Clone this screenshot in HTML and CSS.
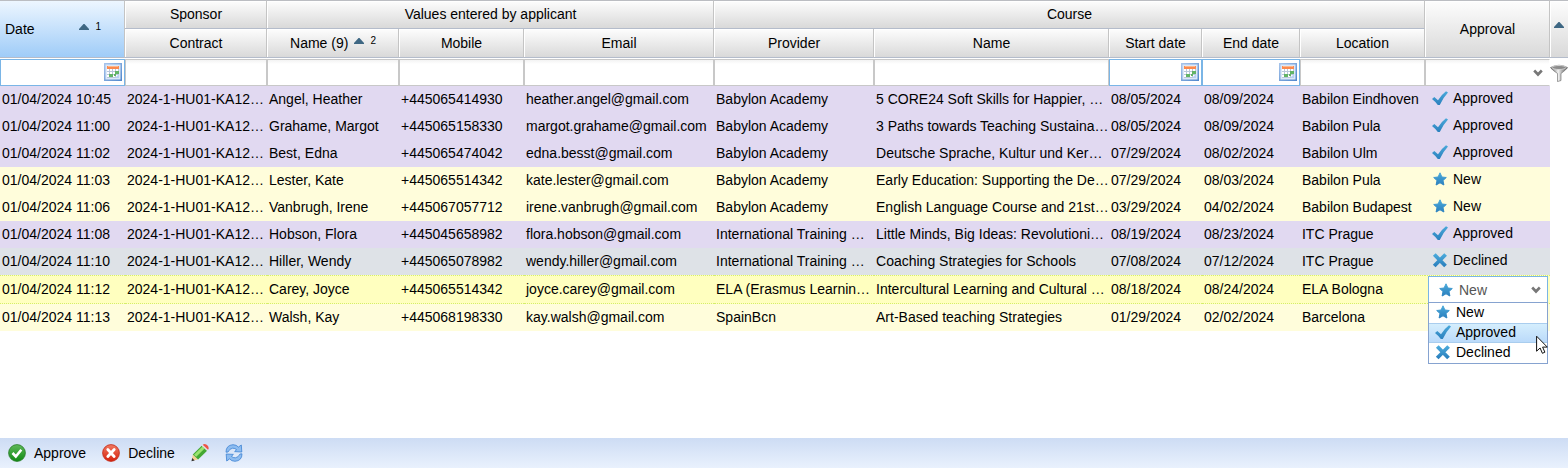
FILE: index.html
```html
<!DOCTYPE html>
<html lang="en">
<head>
<meta charset="utf-8">
<title>Applications</title>
<link rel="stylesheet" href="styles.css">
</head>
<body>
<svg class="sprite" aria-hidden="true">
  <defs>
    <linearGradient id="blue" x1="0" y1="0" x2="0" y2="1"><stop offset="0" stop-color="#4aa9da"/><stop offset="1" stop-color="#2b80be"/></linearGradient>
    <linearGradient id="green" x1="0" y1="0" x2="0" y2="1"><stop offset="0" stop-color="#5fb85a"/><stop offset="1" stop-color="#0f8a12"/></linearGradient>
    <linearGradient id="red" x1="0" y1="0" x2="0" y2="1"><stop offset="0" stop-color="#f07a62"/><stop offset="1" stop-color="#d6210c"/></linearGradient>
    <linearGradient id="frame" x1="0" y1="0" x2="1" y2="1"><stop offset="0" stop-color="#a9c6ec"/><stop offset="1" stop-color="#4f86cc"/></linearGradient>
    <linearGradient id="metal" x1="0" y1="0" x2="1" y2="0"><stop offset="0" stop-color="#666"/><stop offset=".45" stop-color="#f2f2f2"/><stop offset="1" stop-color="#505050"/></linearGradient>
    <symbol id="check" viewBox="0 0 16 16"><path fill="url(#blue)" d="M0 9 2.300 6.900 6 10.200Q9 5 14 1.200L16 2.500Q10.800 8 7.800 15H5.800Q3.400 11.600 0 9z"/></symbol>
    <symbol id="star" viewBox="0 0 16 16"><path fill="url(#blue)" stroke="url(#blue)" stroke-linejoin="round" d="M8 1.800 9.900 6l4.400.5-3.300 3 .9 4.500L8 11.800 4.100 14 5 9.500l-3.300-3L6.100 6z"/></symbol>
    <symbol id="cross" viewBox="0 0 16 16"><path fill="none" stroke="url(#blue)" stroke-width="3.800" d="M2.300 2.500 13.500 14M13.600 2.500 2.200 14"/></symbol>
    <symbol id="calendar" viewBox="0 0 18 18"><path fill="url(#frame)" d="M0 0h18v18H0z"/><path fill="#dce8f8" d="M1.500 1.500h15v15h-15z"/><path fill="#fff" d="M3 3h12v12H3z"/><path fill="#b9c7da" d="M3 8h12v1H3zM3 11h12v1H3zM3 14h12v1H3zM5 6h1v9H5zM8 6h1v9H8zM11 6h1v9h-1zM14 6h1v9h-1z"/><path fill="#fb8a4e" d="M3 3h12v3H3z"/><path fill="#ffb78a" d="M4 3h10v1H4z"/><path fill="#62b466" d="M11 8h4v3h-4zM5 11h4v3H5zM10 11h2v2h-2z"/><path fill="#b8d0f2" d="m11 15 4-4v4z"/></symbol>
    <symbol id="sort" viewBox="0 0 10 6"><path fill="#3e6783" d="M4.500 0h1L10 5v1H0V5z"/></symbol>
    <symbol id="funnel" viewBox="0 0 18 18"><path fill="url(#metal)" stroke="#666" stroke-width=".6" d="M.5 3.500Q9-1 17.500 3.500 17 5 11 9.500v7L7.500 17.600V9.500Q1.500 5.500.5 3.500z"/><ellipse cx="9" cy="3.500" rx="7" ry="2" fill="#8b8b8b" stroke="#ddd" stroke-width=".8"/></symbol>
    <symbol id="chevron" viewBox="0 0 10 8"><path fill="none" stroke="#777" stroke-width="2.600" d="M1.200 1.500 5 5.500l3.800-4"/></symbol>
    <symbol id="ok" viewBox="0 0 18 18"><circle cx="9" cy="9" r="8.400" fill="url(#green)" stroke="#2b7d2c" stroke-width=".8"/><path d="m4.500 9 3.300 3.500 5.500-6.800" fill="none" stroke="#fff" stroke-width="2.600"/></symbol>
    <symbol id="no" viewBox="0 0 18 18"><circle cx="9" cy="9" r="8.400" fill="url(#red)" stroke="#c22a18" stroke-width=".8"/><path d="m5.800 5.500 6.400 7m0-7-6.400 7" stroke="#fff" stroke-width="2.800" stroke-linecap="round"/></symbol>
    <symbol id="pencil" viewBox="0 0 18 18"><path fill="#f4cf91" d="m.8 16.800 1-6.400 5.300 5z"/><path fill="#333" d="m.5 17.300.6-3.200 2.600 2.500z"/><path fill="#43a832" d="m1.800 10.400 8.900-8.700 5.400 5-9 8.700z"/><path fill="#9ae36f" d="m3 10.700 8.500-8.300 2.200 2-8.500 8.300z"/><path fill="#e2e2e2" d="m10.700 1.700 1-.9 5.300 5-.9.900z"/><path fill="#ee5545" d="M11.700.8q1.800-1.300 3.600-.2 2.300 1.200 2.400 3.400 0 1.100-.7 1.800z"/></symbol>
    <symbol id="refresh" viewBox="0 0 18 18"><g id="swirl"><path fill="#8dbcf0" stroke="#3d83d3" stroke-width=".8" d="M1 8.200Q1 1.200 8 .7q3.400 0 5.400 2.400L16.300 1l.5 7-7.200-.4 2-1.900Q10 4.100 7.600 4.200 4.600 4.500 3 8z"/></g><use href="#swirl" transform="rotate(180 9 9)"/></symbol>
    <symbol id="pointer" viewBox="0 0 12 19"><path fill="#fff" stroke="#111" d="M.6 1.200v15L4.100 13l2.300 5.300 2.500-1.100-2.300-5.100h4.700z"/></symbol>
  </defs>
</svg>

<main class="grid-area">
<table class="grid">
  <colgroup>
    <col class="c-date"><col class="c-contract"><col class="c-name"><col class="c-mobile"><col class="c-email"><col class="c-provider"><col class="c-course"><col class="c-start"><col class="c-end"><col class="c-location"><col class="c-approval"><col class="c-gutter">
  </colgroup>
  <thead>
    <tr class="head">
      <th rowspan="2" class="sorted"><span class="sort-label"><span>Date</span><span class="sort-mark"><svg class="sort"><use href="#sort"/></svg><sup>1</sup></span></span></th>
      <th>Sponsor</th>
      <th colspan="3">Values entered by applicant</th>
      <th colspan="5">Course</th>
      <th rowspan="2" class="last">Approval</th>
      <th rowspan="2" class="gutter-head"><svg class="sort"><use href="#sort"/></svg></th>
    </tr>
    <tr class="head">
      <th>Contract</th>
      <th><span class="name-label">Name (9)<svg class="sort"><use href="#sort"/></svg><sup>2</sup></span></th>
      <th>Mobile</th><th>Email</th><th>Provider</th><th>Name</th><th>Start date</th><th>End date</th><th>Location</th>
    </tr>
    <tr class="filters">
      <td><div class="field date"><input type="text" aria-label="Filter date"><button type="button" aria-label="Pick date"><svg><use href="#calendar"/></svg></button></div></td>
      <td><div class="field"><input type="text" aria-label="Filter contract"></div></td>
      <td><div class="field"><input type="text" aria-label="Filter applicant name"></div></td>
      <td><div class="field"><input type="text" aria-label="Filter mobile"></div></td>
      <td><div class="field"><input type="text" aria-label="Filter email"></div></td>
      <td><div class="field"><input type="text" aria-label="Filter provider"></div></td>
      <td><div class="field"><input type="text" aria-label="Filter course name"></div></td>
      <td><div class="field date"><input type="text" aria-label="Filter start date"><button type="button" aria-label="Pick start date"><svg><use href="#calendar"/></svg></button></div></td>
      <td><div class="field date"><input type="text" aria-label="Filter end date"><button type="button" aria-label="Pick end date"><svg><use href="#calendar"/></svg></button></div></td>
      <td><div class="field"><input type="text" aria-label="Filter location"></div></td>
      <td><div class="field choice"><select aria-label="Filter approval"><option></option></select><svg class="chevron"><use href="#chevron"/></svg></div></td>
      <td class="gutter"><button type="button" class="funnel" aria-label="Apply filter"><svg><use href="#funnel"/></svg></button></td>
    </tr>
  </thead>
  <tbody>
    <tr class="approved"><td>01/04/2024 10:45</td><td>2024-1-HU01-KA12…</td><td>Angel, Heather</td><td>+445065414930</td><td>heather.angel@gmail.com</td><td>Babylon Academy</td><td>5 CORE24 Soft Skills for Happier, …</td><td>08/05/2024</td><td>08/09/2024</td><td>Babilon Eindhoven</td><td><span class="status"><svg><use href="#check"/></svg>Approved</span></td><td class="gutter"></td></tr>
    <tr class="approved"><td>01/04/2024 11:00</td><td>2024-1-HU01-KA12…</td><td>Grahame, Margot</td><td>+445065158330</td><td>margot.grahame@gmail.com</td><td>Babylon Academy</td><td>3 Paths towards Teaching Sustaina…</td><td>08/05/2024</td><td>08/09/2024</td><td>Babilon Pula</td><td><span class="status"><svg><use href="#check"/></svg>Approved</span></td><td class="gutter"></td></tr>
    <tr class="approved"><td>01/04/2024 11:02</td><td>2024-1-HU01-KA12…</td><td>Best, Edna</td><td>+445065474042</td><td>edna.besst@gmail.com</td><td>Babylon Academy</td><td>Deutsche Sprache, Kultur und Ker…</td><td>07/29/2024</td><td>08/02/2024</td><td>Babilon Ulm</td><td><span class="status"><svg><use href="#check"/></svg>Approved</span></td><td class="gutter"></td></tr>
    <tr class="new"><td>01/04/2024 11:03</td><td>2024-1-HU01-KA12…</td><td>Lester, Kate</td><td>+445065514342</td><td>kate.lester@gmail.com</td><td>Babylon Academy</td><td>Early Education: Supporting the De…</td><td>07/29/2024</td><td>08/03/2024</td><td>Babilon Pula</td><td><span class="status"><svg><use href="#star"/></svg>New</span></td><td class="gutter"></td></tr>
    <tr class="new"><td>01/04/2024 11:06</td><td>2024-1-HU01-KA12…</td><td>Vanbrugh, Irene</td><td>+445067057712</td><td>irene.vanbrugh@gmail.com</td><td>Babylon Academy</td><td>English Language Course and 21st…</td><td>03/29/2024</td><td>04/02/2024</td><td>Babilon Budapest</td><td><span class="status"><svg><use href="#star"/></svg>New</span></td><td class="gutter"></td></tr>
    <tr class="approved"><td>01/04/2024 11:08</td><td>2024-1-HU01-KA12…</td><td>Hobson, Flora</td><td>+445045658982</td><td>flora.hobson@gmail.com</td><td>International Training …</td><td>Little Minds, Big Ideas: Revolutioni…</td><td>08/19/2024</td><td>08/23/2024</td><td>ITC Prague</td><td><span class="status"><svg><use href="#check"/></svg>Approved</span></td><td class="gutter"></td></tr>
    <tr class="declined"><td>01/04/2024 11:10</td><td>2024-1-HU01-KA12…</td><td>Hiller, Wendy</td><td>+445065078982</td><td>wendy.hiller@gmail.com</td><td>International Training …</td><td>Coaching Strategies for Schools</td><td>07/08/2024</td><td>07/12/2024</td><td>ITC Prague</td><td><span class="status"><svg><use href="#cross"/></svg>Declined</span></td><td class="gutter"></td></tr>
    <tr class="selected"><td>01/04/2024 11:12</td><td>2024-1-HU01-KA12…</td><td>Carey, Joyce</td><td>+445065514342</td><td>joyce.carey@gmail.com</td><td>ELA (Erasmus Learnin…</td><td>Intercultural Learning and Cultural …</td><td>08/18/2024</td><td>08/24/2024</td><td>ELA Bologna</td>
      <td class="editing"><div class="editor">
        <svg class="value-icon"><use href="#star"/></svg>
        <select aria-label="Approval"><option>New</option><option>Approved</option><option>Declined</option></select>
        <svg class="chevron"><use href="#chevron"/></svg>
        <ul class="options" role="listbox" aria-label="Approval options">
          <li role="option"><svg><use href="#star"/></svg>New</li>
          <li role="option" class="hover"><svg><use href="#check"/></svg>Approved</li>
          <li role="option"><svg><use href="#cross"/></svg>Declined</li>
        </ul>
        <svg class="pointer"><use href="#pointer"/></svg>
      </div></td><td class="gutter"></td></tr>
    <tr class="new"><td>01/04/2024 11:13</td><td>2024-1-HU01-KA12…</td><td>Walsh, Kay</td><td>+445068198330</td><td>kay.walsh@gmail.com</td><td>SpainBcn</td><td>Art-Based teaching Strategies</td><td>01/29/2024</td><td>02/02/2024</td><td>Barcelona</td><td></td><td class="gutter"></td></tr>
  </tbody>
</table>
</main>

<footer class="toolbar">
  <button type="button"><svg><use href="#ok"/></svg>Approve</button>
  <button type="button"><svg><use href="#no"/></svg>Decline</button>
  <button type="button" aria-label="Edit"><svg><use href="#pencil"/></svg></button>
  <button type="button" aria-label="Refresh"><svg><use href="#refresh"/></svg></button>
</footer>
</body>
</html>
```
FILE: styles.css
```css
* { box-sizing: border-box; }

body {
  margin: 0;
  min-height: 100vh;
  display: flex;
  flex-direction: column;
  background: #fff;
  color: #000;
  font: 14px/18px "Liberation Sans", Arial, sans-serif;
}

button, input, select {
  font: inherit;
  color: inherit;
  margin: 0;
  padding: 0;
  border: 0;
  border-radius: 0;
  background: none;
  outline: 0;
}

select { appearance: none; }
svg { display: block; flex: none; }
.sprite { position: absolute; width: 0; height: 0; }
.grid-area { flex: 1; }

.grid {
  width: 100%;
  table-layout: fixed;
  border-collapse: separate;
  border-spacing: 0;
}

.c-date, .c-mobile, .c-location, .c-approval { width: 125px; }
.c-contract { width: 142px; }
.c-name { width: 132px; }
.c-email { width: 190px; }
.c-provider { width: 160px; }
.c-start { width: 93px; }
.c-end { width: 98px; }
.c-gutter { width: 18px; }

/* Header */
.head th {
  height: 29px;
  padding: 0 3px 0 4px;
  font-weight: normal;
  white-space: nowrap;
  background: linear-gradient(#fdfdfd, #d9d9d9);
  border-right: 1px solid #c4c4c4;
  border-bottom: 1px solid #b4bccb;
  box-shadow: inset 1px 1px #fff;
}

.head:first-child th { padding-bottom: 1px; border-top: 1px solid #bbbdc2; }
.head .sorted { background: linear-gradient(#edf6ff, #9fccf8); box-shadow: none; }
.head:first-child .gutter-head { padding: 0 0 8px; border-right: 0; }
.gutter-head .sort { margin: 0 auto; }
.sort { width: 10px; height: 6px; }
.sort-label, .sort-mark, .name-label { display: flex; align-items: center; }
.sort-label { justify-content: space-between; padding: 0 20px 0 1px; }
.sort-mark { gap: 6px; padding-bottom: 4px; }
.name-label { justify-content: center; gap: 6px; }
.name-label .sort, .name-label sup { margin-bottom: 4px; }
sup { font-size: 10px; line-height: 12px; }

/* Filters */
.filters td { padding: 1px 0 0; }

.field {
  position: relative;
  display: flex;
  align-items: center;
  height: 27px;
  border: 1px solid #c8c8c8;
  background: linear-gradient(#f3f3f3, #fff 4px);
}

.field input, .field select { flex: 1; min-width: 0; height: 100%; padding: 0 3px; }
.field.date { border-color: #7ab5e6; background: #fff; padding: 0 2px 1px 0; }
.field.date svg { width: 18px; height: 18px; }
.field.choice { border-right-color: #fff; }
.field .chevron { right: 6px; }
.chevron { position: absolute; width: 10px; height: 8px; pointer-events: none; }
.funnel { display: block; }
.funnel svg { width: 18px; height: 18px; }

/* Rows */
tbody td {
  height: 27px;
  padding: 0 0 2px 2px;
  white-space: nowrap;
  overflow: hidden;
}

.approved td { background: #e1d9f1; }
.new td { background: #fffddb; }
.declined td { background: #dee2e7; }

.selected td {
  height: 29px;
  background: #ffffbf;
  border-top: 1px dotted #d5ee6a;
  border-bottom: 1px dotted #d5ee6a;
}

tbody .gutter { background: none; border: 0; }

.status { display: flex; align-items: center; gap: 5px; padding: 0 0 1px 5px; }
.status svg { width: 16px; height: 16px; }

/* Approval editor */
.selected .editing { overflow: visible; padding: 0 2px 0 3px; }

.editor {
  position: relative;
  display: flex;
  align-items: center;
  height: 27px;
  border: 1px solid #7ab5e6;
  background: #fff;
  color: #555;
}

.editor select { flex: 1; min-width: 0; height: 100%; padding-left: 30px; }
.value-icon { position: absolute; left: 9px; width: 16px; height: 16px; }
.editor .chevron { right: 6px; }

.options {
  position: absolute;
  z-index: 1;
  top: 25px;
  left: -1px;
  right: -1px;
  margin: 0;
  padding: 0;
  list-style: none;
  border: 1px solid #86a3d0;
  background: #fff;
  color: #000;
}

.options li { display: flex; align-items: center; gap: 5px; height: 20px; padding: 0 0 2px 6px; }
.options svg { width: 16px; height: 16px; }
.options .hover { background: linear-gradient(#d6effd, #b9d9fa); box-shadow: inset 0 1px #a9cdee, inset 0 -1px #a9cdee; }
.pointer { position: absolute; z-index: 2; top: 58px; right: -1px; width: 12px; height: 19px; }

/* Toolbar */
.toolbar {
  display: flex;
  align-items: center;
  gap: 16px;
  height: 30px;
  padding: 0 8px;
  background: linear-gradient(#cddcf4, #e9f1fd);
}

.toolbar button { display: flex; align-items: center; gap: 8px; }
.toolbar svg { width: 18px; height: 18px; }
```
